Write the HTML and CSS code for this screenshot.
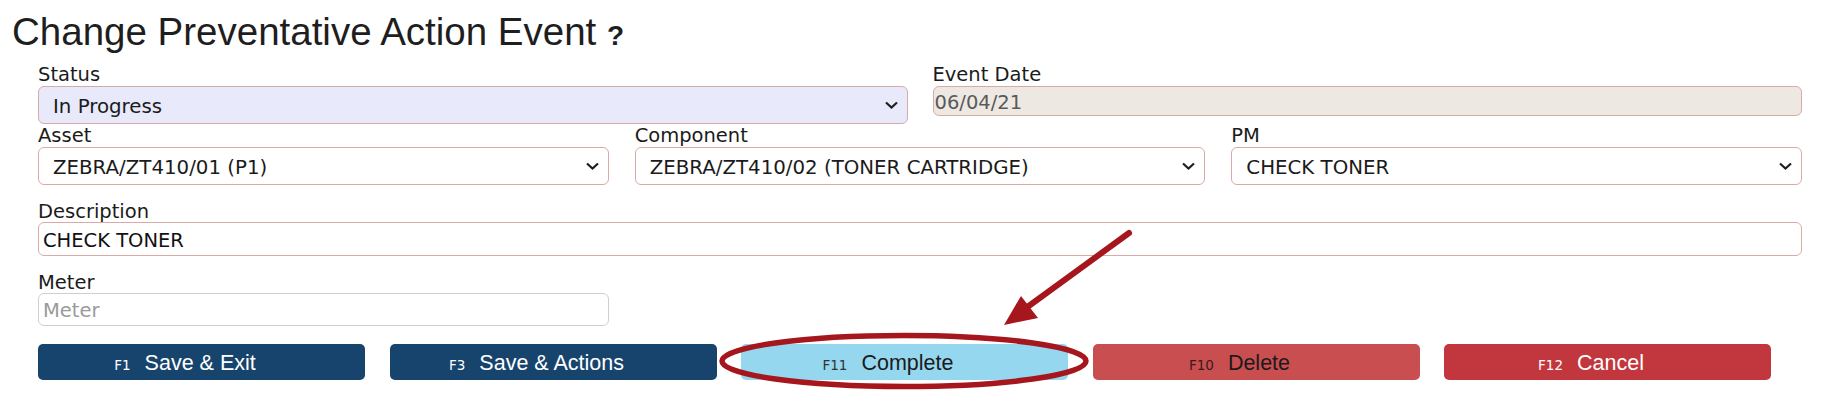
FILE: index.html
```html
<!DOCTYPE html>
<html lang="en">
<head>
  <meta charset="UTF-8">
  <title>Change Preventative Action Event</title>
  <link rel="stylesheet" href="styles.css">
</head>
<body>
  <div class="page">
    <h1 class="title">Change Preventative Action Event <span class="help">?</span></h1>

    <form class="form">
      <div class="row row-2">
        <div class="field">
          <label>Status</label>
          <div class="select select-status">
            <span>In Progress</span>
            <svg class="chevron" width="13" height="8" viewBox="0 0 13 8"><polyline points="1,1.5 6.5,6.5 12,1.5"/></svg>
          </div>
        </div>
        <div class="field">
          <label>Event Date</label>
          <input class="input input-readonly" value="06/04/21" readonly>
        </div>
      </div>

      <div class="row row-3 row-selects">
        <div class="field">
          <label>Asset</label>
          <div class="select">
            <span>ZEBRA/ZT410/01 (P1)</span>
            <svg class="chevron" width="13" height="8" viewBox="0 0 13 8"><polyline points="1,1.5 6.5,6.5 12,1.5"/></svg>
          </div>
        </div>
        <div class="field">
          <label>Component</label>
          <div class="select">
            <span>ZEBRA/ZT410/02 (TONER CARTRIDGE)</span>
            <svg class="chevron" width="13" height="8" viewBox="0 0 13 8"><polyline points="1,1.5 6.5,6.5 12,1.5"/></svg>
          </div>
        </div>
        <div class="field">
          <label>PM</label>
          <div class="select">
            <span>CHECK TONER</span>
            <svg class="chevron" width="13" height="8" viewBox="0 0 13 8"><polyline points="1,1.5 6.5,6.5 12,1.5"/></svg>
          </div>
        </div>
      </div>

      <div class="row row-desc">
        <div class="field field-text">
          <label>Description</label>
          <input class="input" value="CHECK TONER">
        </div>
      </div>

      <div class="row row-3">
        <div class="field field-text">
          <label>Meter</label>
          <input class="input input-meter" placeholder="Meter">
        </div>
      </div>

      <div class="buttons">
        <button type="button" class="btn btn-save"><span class="key">F1</span>Save &amp; Exit</button>
        <button type="button" class="btn btn-save"><span class="key">F3</span>Save &amp; Actions</button>
        <button type="button" class="btn btn-complete"><span class="key">F11</span>Complete</button>
        <button type="button" class="btn btn-delete"><span class="key">F10</span>Delete</button>
        <button type="button" class="btn btn-cancel"><span class="key">F12</span>Cancel</button>
      </div>
    </form>

    <!-- annotation drawn over the screenshot -->
    <svg class="annotation" width="1843" height="394" viewBox="0 0 1843 394">
      <ellipse cx="904" cy="361" rx="182" ry="25.5"/>
      <line x1="1129" y1="233" x2="1026" y2="308"/>
      <polygon points="1004,325 1021,296 1038,318"/>
    </svg>
  </div>
</body>
</html>
```

FILE: styles.css
```css
* {
  box-sizing: border-box;
  margin: 0;
  padding: 0;
}
body {
  font-family: "DejaVu Sans", Verdana, sans-serif;
  color: #1b1b1b;
  background-color: #fff;
}
.page {
  position: relative;
  width: 1843px;
  height: 394px;
  padding: 0 41px 0 12px;
  overflow: hidden;
}
.title {
  font-family: "Liberation Sans", Arial, sans-serif;
  font-weight: normal;
  font-size: 38.5px;
  line-height: 42px;
  height: 63px;
  padding-top: 11px;
  color: #1e1e1e;
}
.title .help {
  font-size: 28px;
  font-weight: bold;
}
.form {
  margin-left: 26px;
}
.row {
  display: grid;
  align-items: start;
}
.row-2 {
  grid-template-columns: 1fr 1fr;
  column-gap: 25px;
}
.row-3 {
  grid-template-columns: repeat(3, 1fr);
  column-gap: 26px;
}
.row-selects,
.row-desc {
  margin-bottom: 17px;
}
.field label {
  display: block;
  font-size: 19.5px;
  line-height: 23px;
}
.field-text label {
  line-height: 20px;
}
.select {
  height: 38px;
  display: flex;
  align-items: center;
  justify-content: space-between;
  padding: 3px 9px 0 14px;
  font-size: 19.8px;
  border: 1px solid #d8aba8;
  border-radius: 6px;
  background-color: #fff;
  white-space: nowrap;
}
.select-status {
  background-color: #e8e9fa;
}
.chevron {
  margin-top: -3px;
}
.chevron polyline {
  fill: none;
  stroke: #1e1e1e;
  stroke-width: 2.2;
}
.input {
  display: block;
  width: 100%;
  height: 34px;
  padding: 2px 4px 0;
  font-family: "DejaVu Sans", Verdana, sans-serif;
  font-size: 19.5px;
  color: #111;
  border: 1px solid #d8aba8;
  border-radius: 6px;
  background-color: #fff;
  outline: none;
}
.input-readonly {
  height: 30px;
  padding-left: 1px;
  color: #5a5a5a;
  background-color: #ede8e1;
}
.input-meter {
  height: 33px;
  border-color: #cfcfcf;
}
.input-meter::placeholder {
  color: #9a9a9a;
}
.buttons {
  display: grid;
  grid-template-columns: repeat(5, 327px);
  column-gap: 24.5px;
  margin-top: 18px;
}
.btn {
  height: 36px;
  display: flex;
  align-items: center;
  justify-content: center;
  padding: 3px 33px 0 0;
  border: none;
  border-radius: 5px;
  font-family: "Liberation Sans", Arial, sans-serif;
  font-size: 21.5px;
  color: #fff;
}
.btn .key {
  font-family: "DejaVu Sans", Verdana, sans-serif;
  font-size: 13.5px;
  margin-right: 14px;
  padding-top: 3px;
}
.btn-save {
  background-color: #16446d;
}
.btn-complete {
  background-color: #94d7ef;
  color: #1b1b1b;
}
.btn-complete .key {
  color: #333;
}
.btn-delete {
  background-color: #c94e50;
  color: #1b1b1b;
}
.btn-delete .key {
  color: #3a1a1a;
}
.btn-cancel {
  background-color: #c2373d;
}
.annotation {
  position: absolute;
  top: 0;
  left: 0;
  pointer-events: none;
}
.annotation ellipse {
  fill: none;
  stroke: #a5161d;
  stroke-width: 5.5;
}
.annotation line {
  stroke: #a5161d;
  stroke-width: 6;
  stroke-linecap: round;
}
.annotation polygon {
  fill: #a5161d;
}
```
